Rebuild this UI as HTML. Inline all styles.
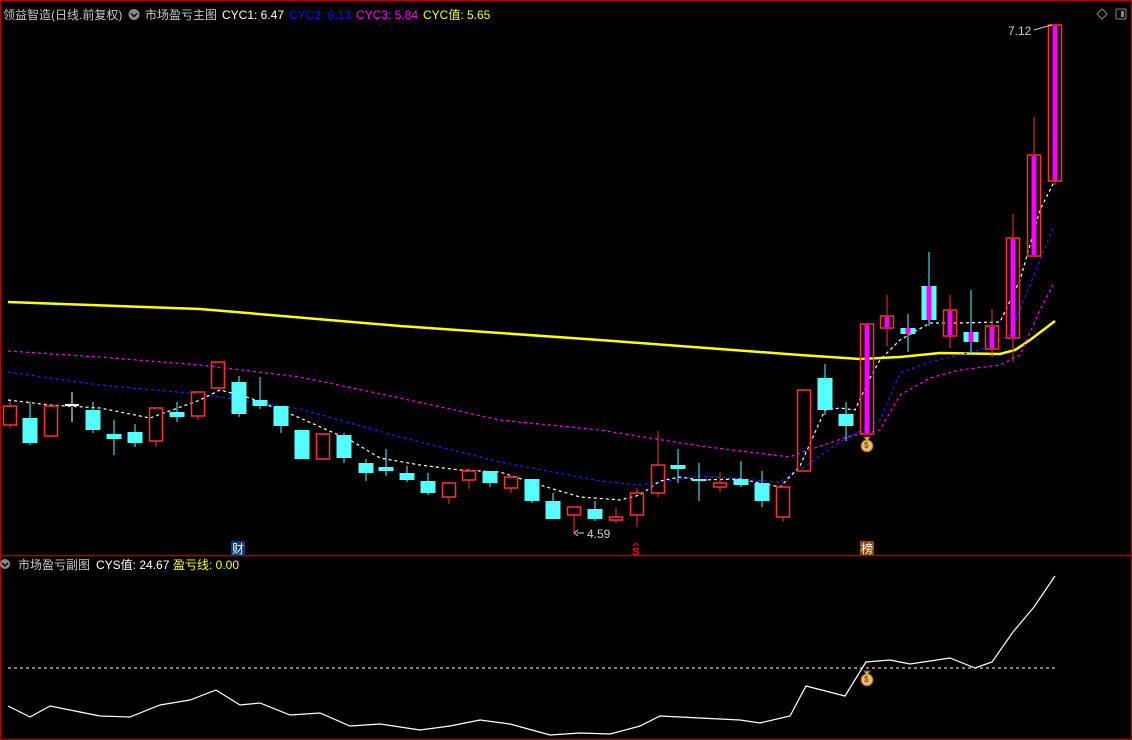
<!DOCTYPE html>
<html><head><meta charset="utf-8"><style>
html,body{margin:0;padding:0;background:#000;width:1132px;height:740px;overflow:hidden}
svg{display:block}
text{font-family:"Liberation Sans","Noto Sans CJK SC",sans-serif}
</style></head><body>
<svg id="s" width="1132" height="740" xmlns="http://www.w3.org/2000/svg">
<rect x="0" y="0" width="1132" height="740" fill="#000"/>
<rect x="0.5" y="0.5" width="1131" height="739" fill="none" stroke="#b00000" stroke-width="1.5"/>
<line x1="0" y1="555.5" x2="1132" y2="555.5" stroke="#b00000" stroke-width="1.5"/>
<g id="g"></g>
<text x="3" y="19" font-size="12" fill="#c8c8c8">领益智造(日线.前复权)</text>
<circle cx="134" cy="14.5" r="5.5" fill="#888"/><path d="M131 13.5l3 3 3-3" stroke="#000" stroke-width="1.5" fill="none"/>
<text x="145" y="19" font-size="12" fill="#c8c8c8">市场盈亏主图</text>
<text x="222" y="19" font-size="12" fill="#fff">CYC1: 6.47</text>
<text x="289" y="19" font-size="12" fill="#1010ff">CYC2: 6.13</text>
<text x="356" y="19" font-size="12" fill="#ff00ff">CYC3: 5.84</text>
<text x="423" y="19" font-size="12" fill="#ffff00">CYC值: 5.65</text>
<path d="M1102 9l5 5-5 5-5-5z" stroke="#888" fill="none"/>
<rect x="1116" y="9" width="10" height="10" rx="1.5" stroke="#888" fill="none"/><rect x="1121" y="11" width="3" height="6" fill="#888"/>
<text x="1008" y="35" font-size="12" fill="#ccc">7.12</text>
<path d="M1034 30 L1048 26 L1052 25" stroke="#ccc" fill="none"/>
<path d="M577 533 L584 533 M574 533 l4 -3 M574 533 l4 3" stroke="#ccc" fill="none"/>
<text x="587" y="538" font-size="12" fill="#ccc">4.59</text>
<rect x="231" y="541" width="14" height="14" fill="#0a3a6e"/><text x="232" y="553" font-size="12" fill="#fff">财</text>
<text x="632" y="555" font-size="11" font-weight="bold" fill="#f00">S</text><path d="M633 546l3-3 3 3" stroke="#f00" fill="none"/>
<rect x="860" y="541" width="14" height="14" fill="#8a4a10"/><text x="861" y="553" font-size="12" fill="#fff">榜</text>
<circle cx="5" cy="564" r="5" fill="#888"/><path d="M2 563l3 3 3-3" stroke="#000" stroke-width="1.5" fill="none"/>
<text x="18" y="569" font-size="12" fill="#c8c8c8">市场盈亏副图</text>
<text x="96" y="569" font-size="12" fill="#fff">CYS值: 24.67</text>
<text x="173" y="569" font-size="12" fill="#ffff00">盈亏线: 0.00</text>
</svg>
<script>
var g=document.getElementById('g'),h='';
function pl(pts,c,w,d){h+='<polyline points="'+pts+'" fill="none" stroke="'+c+'" stroke-width="'+w+'"'+(d?' stroke-dasharray="'+d+'"':'')+'/>';}
pl("8,302 200,309 400,326 600,340 800,355 860,359 900,357 940,353 1000,354 1015,350 1030,340 1055,321","#ffff00",2.5);
pl("8,351 100,357 200,365 300,377 400,398 500,420 600,430 700,446 790,457 800,453 850,436 880,430 900,395 930,378 960,370 1000,365 1020,355 1040,310 1053,285","#ff00ff",1.2,"3,3");
pl("8,372 100,385 200,394 300,409 400,437 500,462 600,481 640,485 700,476 780,482 800,470 840,442 880,420 900,373 930,362 980,350 1010,335 1030,285 1053,228","#2020ff",1.2,"3,3");
pl("8,400 50,405 100,408 150,418 200,400 220,390 250,398 300,418 350,440 380,458 420,465 460,470 500,472 540,485 580,497 620,500 640,495 660,481 680,477 700,480 740,479 780,487 800,466 825,410 840,408 855,410 870,378 880,360 900,340 930,323 960,323 1000,322 1020,280 1040,210 1055,180","#fff",1.2,"3,3");
pl("8,668 1055,668","#fff",1,"3,3");
pl("8,706 30,717 50,706 80,712 100,716 130,717 160,705 190,700 216,690 240,705 260,703 290,715 320,713 350,726 380,724 420,730 450,726 480,720 510,724 550,735 580,733 610,734 640,726 660,716 700,718 740,720 760,723 790,716 806,686 845,696 866,662 890,660 910,664 950,658 975,668 992,662 1013,632 1034,607 1055,576","#fff",1.2);
var C=[[10,406,425,401,428,'r'],[30,418,443,402,445,'c'],[51,406,436,406,436,'r'],[72,405,407,392,422,'w'],[93,410,430,402,433,'c'],[114,434,439,420,455,'c'],[135,432,443,424,447,'c'],[156,408,441,408,447,'r'],[177,412,417,402,422,'c'],[198,392,416,392,420,'r'],[218,362,388,362,388,'r'],[239,382,414,376,417,'c'],[260,400,406,377,409,'c'],[281,406,426,406,433,'c'],[302,430,459,430,459,'c'],[323,434,459,434,459,'r'],[344,435,458,433,463,'c'],[366,463,473,459,481,'c'],[386,467,471,449,476,'c'],[407,473,480,466,482,'c'],[428,481,493,473,495,'c'],[449,483,497,482,504,'r'],[469,471,480,468,489,'r'],[490,471,483,471,487,'c'],[511,477,488,476,493,'r'],[532,479,501,479,503,'c'],[553,501,519,493,519,'c'],[574,507,515,507,533,'r'],[595,509,519,501,521,'c'],[616,517,520,508,523,'r'],[637,493,515,488,527,'r'],[658,465,493,431,497,'r'],[678,465,469,449,483,'c'],[699,479,481,463,501,'c'],[720,483,487,472,492,'r'],[741,479,485,461,487,'c'],[762,483,501,471,507,'c'],[783,487,517,487,522,'r'],[804,390,471,390,471,'r'],[825,378,410,364,415,'c'],[846,414,426,402,441,'c'],[867,324,434,324,434,'m'],[887,316,328,295,346,'m'],[908,328,334,314,352,'M'],[929,286,320,252,326,'M'],[950,310,336,295,348,'m'],[971,332,342,290,354,'M'],[992,326,349,309,357,'m'],[1013,238,338,214,362,'m'],[1034,155,256,117,256,'m'],[1055,25,181,25,185,'m']];
C.forEach(function(k){var x=k[0],t=k[1],b=k[2],hi=k[3],lo=k[4],ty=k[5];
var col=(ty=='c'||ty=='M')?'#55ffff':(ty=='w'?'#fff':'#ff3030');
if(hi<t)h+='<line x1="'+x+'" y1="'+hi+'" x2="'+x+'" y2="'+t+'" stroke="'+col+'"/>';
if(lo>b)h+='<line x1="'+x+'" y1="'+b+'" x2="'+x+'" y2="'+lo+'" stroke="'+col+'"/>';
if(ty=='w'){h+='<line x1="'+(x-7)+'" y1="'+t+'" x2="'+(x+7)+'" y2="'+t+'" stroke="#fff" stroke-width="2"/>';return;}
if(ty=='c'||ty=='M'){h+='<rect x="'+(x-7.5)+'" y="'+t+'" width="15" height="'+Math.max(b-t,2)+'" fill="#55ffff"/>';}
else{h+='<rect x="'+(x-6.5)+'" y="'+t+'" width="13" height="'+Math.max(b-t,2)+'" fill="none" stroke="#ff3030" stroke-width="1.5"/>';}
if(ty=='m'||ty=='M')h+='<rect x="'+(x-2.5)+'" y="'+(t+(ty=='m'?1:0))+'" width="5" height="'+(b-t-(ty=='m'?2:0))+'" fill="#ff00ff"/>';
});
function bag(x,y){h+='<path d="M'+(x-3)+' '+(y-7)+' h6 l-2 3 a6 6 0 1 1 -2 0z" fill="#e8c070" stroke="#8a5a10"/><text x="'+(x-3)+'" y="'+(y+4)+'" font-size="8" fill="#8a4a10" font-weight="bold">$</text>';}
bag(867,444);bag(867,678);
g.innerHTML=h;
</script>
</body></html>
